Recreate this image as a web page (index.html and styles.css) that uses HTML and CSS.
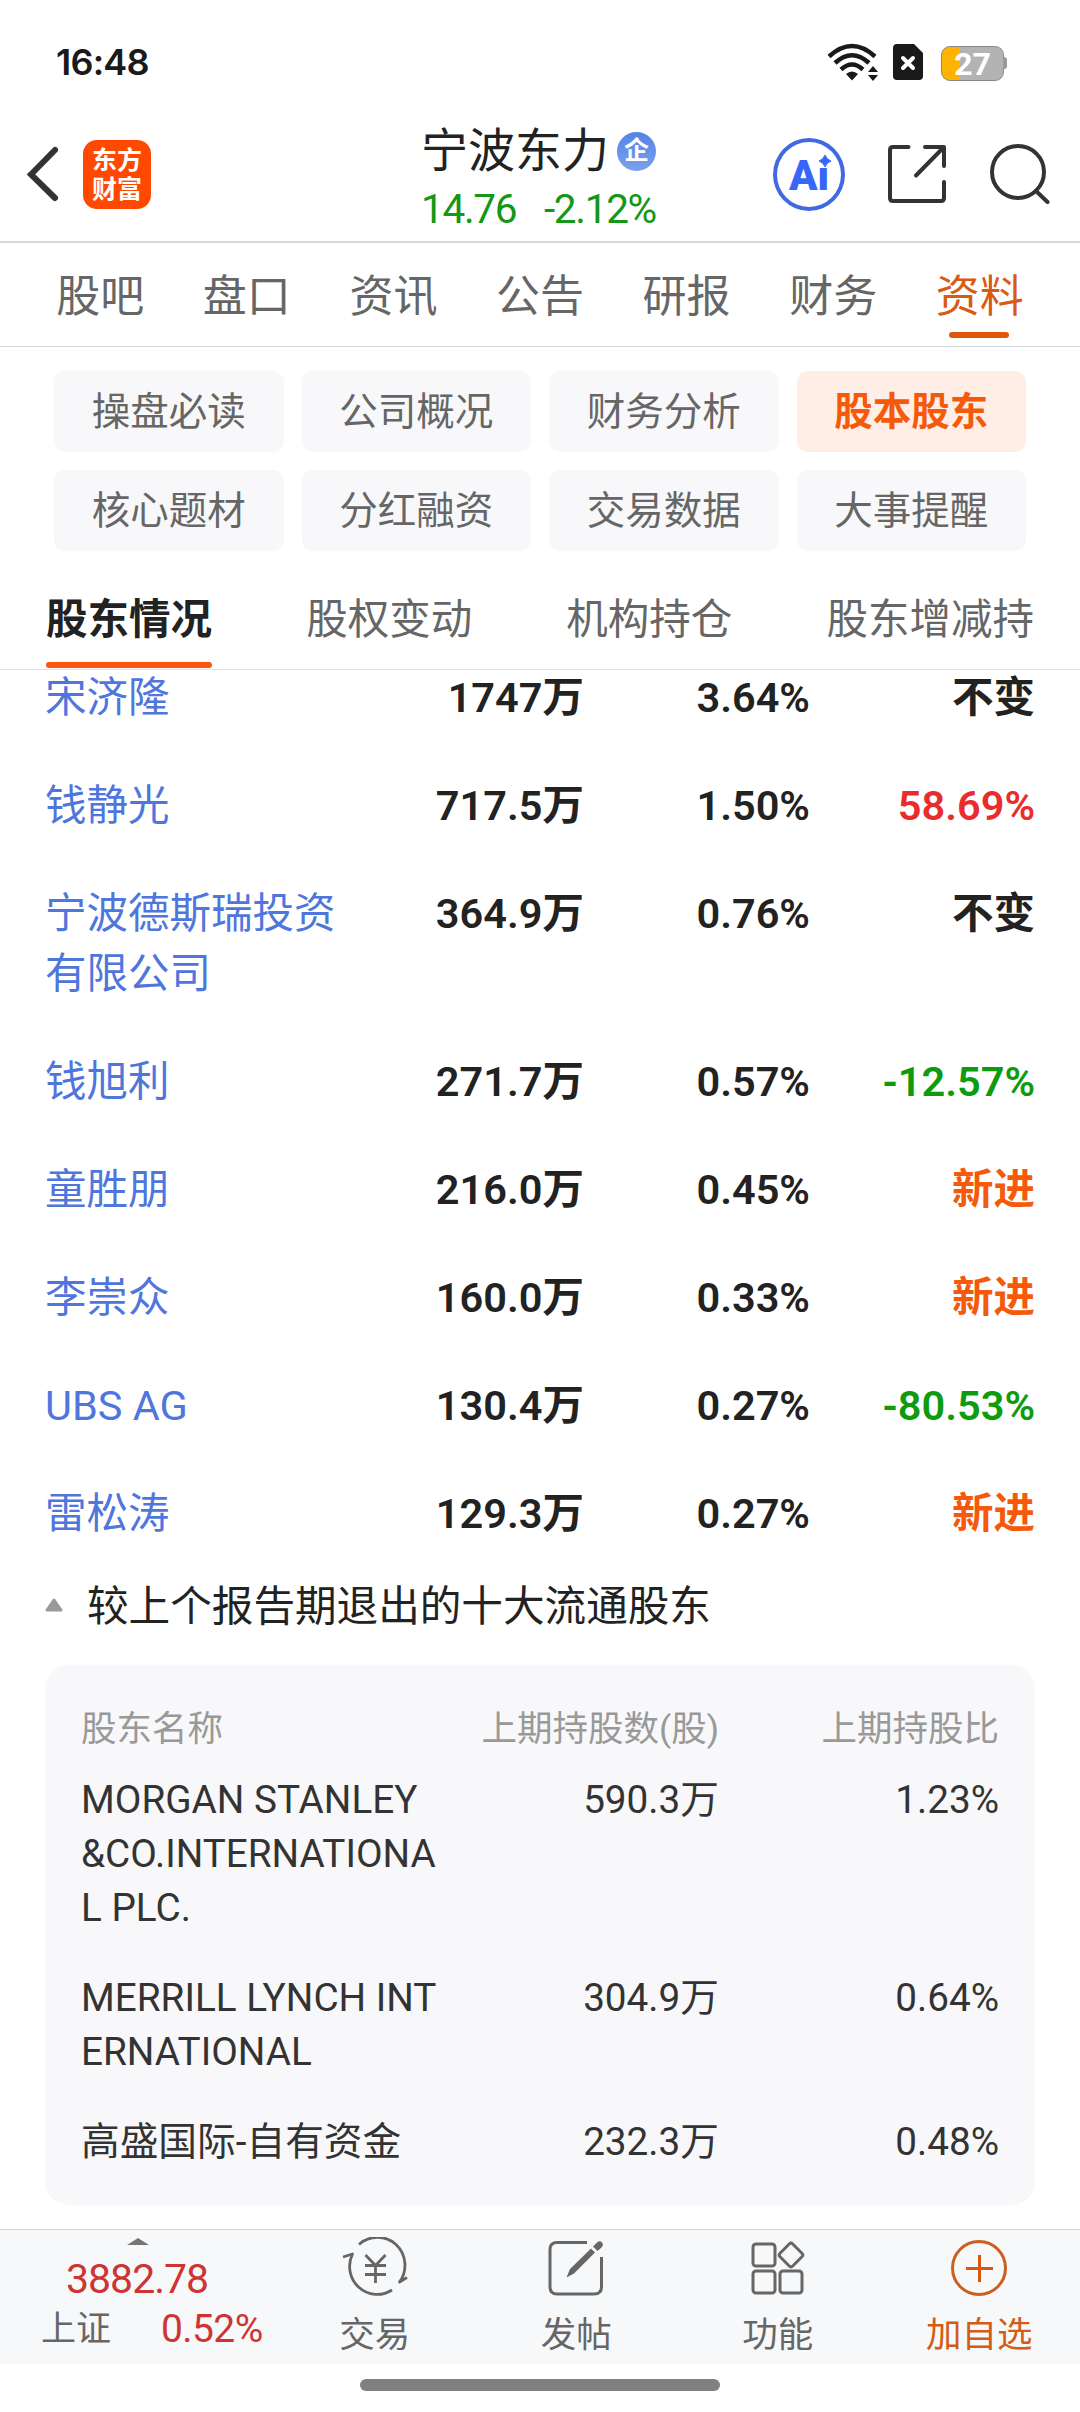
FILE: index.html
```html
<!DOCTYPE html>
<html lang="zh-CN">
<head>
    <meta charset="UTF-8">
    <meta name="viewport" content="width=device-width, initial-scale=1.0">
    <title>宁波东力 - 股本股东</title>
    <link rel="stylesheet" href="styles.css">
</head>
<body>

    <div class="status-bar">
        <span class="time">16:48</span>
        <div class="status-icons">
            <svg class="wifi" width="52" height="38" viewBox="0 0 52 38">
                <g fill="none" stroke="#1a1a1a" stroke-width="4.500">
                    <path d="M2 13.500 Q25 -7.500 48 13.500"/>
                    <path d="M8 20 Q25 4.500 42 20"/>
                    <path d="M14 26.500 Q25 16.500 36 26.500"/>
                </g>
                <path d="M19 31 Q25 26 31 31 L25 37.500 Z" fill="#1a1a1a"/>
                <path d="M41 29 L46 23 L51 29 Z M41 32 L51 32 L46 38 Z" fill="#1a1a1a"/>
            </svg>
            <svg class="sim" width="30" height="36" viewBox="0 0 30 36">
                <path d="M4 0 H21 L30 9 V32 Q30 36 26 36 H4 Q0 36 0 32 V4 Q0 0 4 0 Z" fill="#1a1a1a"/>
                <path d="M10 14 L20 24 M20 14 L10 24" stroke="#fff" stroke-width="4" stroke-linecap="round"/>
            </svg>
            <div class="battery"><span>27</span></div>
        </div>
    </div>

    <header class="header">
        <div class="header-left">
            <svg class="back" width="34" height="56" viewBox="0 0 34 56">
                <path d="M30 4 L6 28.500 L30 52" fill="none" stroke="#333" stroke-width="6" stroke-linecap="round"/>
            </svg>
            <div class="logo">东方<br>财富</div>
        </div>
        <div class="stock">
            <div class="stock-name">宁波东力<span class="badge">企</span></div>
            <div class="stock-price"><span>14.76</span><span>-2.12%</span></div>
        </div>
        <div class="header-right">
            <div class="ai">
                <span>Ai</span>
                <svg class="spark" width="14" height="14" viewBox="0 0 14 14">
                    <path d="M0 0 H14 V14 H0 Z" fill="#fff"/>
                    <path d="M7 1 Q8.500 5.500 13 7 Q8.500 8.500 7 13 Q5.500 8.500 1 7 Q5.500 5.500 7 1 Z" fill="#3866fa" stroke="#3866fa"/>
                </svg>
            </div>
            <svg class="share" width="58" height="60" viewBox="0 0 58 60">
                <g fill="none" stroke="#333" stroke-width="4" stroke-linecap="round" stroke-linejoin="round">
                    <path d="M20.500 3 H5 Q2 3 2 6 V54 Q2 57 5 57 H53 Q56 57 56 54 V38"/>
                    <path d="M37 3 H56 V22 M55 4 L28 31.500"/>
                </g>
            </svg>
            <svg class="search" width="60" height="62" viewBox="0 0 60 62">
                <circle cx="28" cy="29" r="26" fill="none" stroke="#333" stroke-width="4"/>
                <path d="M46 48 L57.500 59" stroke="#333" stroke-width="4" stroke-linecap="round"/>
            </svg>
        </div>
    </header>

    <nav class="tabs">
        <a>股吧</a>
        <a>盘口</a>
        <a>资讯</a>
        <a>公告</a>
        <a>研报</a>
        <a>财务</a>
        <a class="active">资料</a>
    </nav>

    <div class="chips">
        <a>操盘必读</a>
        <a>公司概况</a>
        <a>财务分析</a>
        <a class="active">股本股东</a>
        <a>核心题材</a>
        <a>分红融资</a>
        <a>交易数据</a>
        <a>大事提醒</a>
    </div>

    <nav class="subtabs">
        <a class="active">股东情况</a>
        <a>股权变动</a>
        <a>机构持仓</a>
        <a>股东增减持</a>
    </nav>

    <main class="content">
        <div class="holders">
            <div class="row"><a class="name">宋济隆</a><b>1747万</b><b>3.64%</b><b>不变</b></div>
            <div class="row"><a class="name">钱静光</a><b>717.5万</b><b>1.50%</b><b class="up">58.69%</b></div>
            <div class="row"><a class="name">宁波德斯瑞投资<br>有限公司</a><b>364.9万</b><b>0.76%</b><b>不变</b></div>
            <div class="row"><a class="name">钱旭利</a><b>271.7万</b><b>0.57%</b><b class="down">-12.57%</b></div>
            <div class="row"><a class="name">童胜朋</a><b>216.0万</b><b>0.45%</b><b class="new">新进</b></div>
            <div class="row"><a class="name">李崇众</a><b>160.0万</b><b>0.33%</b><b class="new">新进</b></div>
            <div class="row"><a class="name">UBS AG</a><b>130.4万</b><b>0.27%</b><b class="down">-80.53%</b></div>
            <div class="row"><a class="name">雷松涛</a><b>129.3万</b><b>0.27%</b><b class="new">新进</b></div>
        </div>

        <h3 class="exit-title">
            <svg width="18" height="14" viewBox="0 0 18 14"><path d="M9 2 L16 12 H2 Z" fill="#999" stroke="#999" stroke-width="3" stroke-linejoin="round"/></svg>
            <span>较上个报告期退出的十大流通股东</span>
        </h3>

        <div class="exit-card">
            <div class="exit-row head"><span>股东名称</span><span>上期持股数(股)</span><span>上期持股比</span></div>
            <div class="exit-row"><span>MORGAN STANLEY<br>&amp;CO.INTERNATIONA<br>L PLC.</span><span>590.3万</span><span>1.23%</span></div>
            <div class="exit-row"><span>MERRILL LYNCH INT<br>ERNATIONAL</span><span>304.9万</span><span>0.64%</span></div>
            <div class="exit-row"><span>高盛国际-自有资金</span><span>232.3万</span><span>0.48%</span></div>
        </div>
    </main>

    <footer class="bottom-bar">
        <div class="index">
            <svg width="22" height="7" viewBox="0 0 22 7"><path d="M11 0 L22 7 H0 Z" fill="#777"/></svg>
            <div class="index-value">3882.78</div>
            <div class="index-line"><span>上证</span><em>0.52%</em></div>
        </div>
        <a class="action">
            <svg width="66" height="60" viewBox="0 0 66 60">
                <g fill="none" stroke="#666" stroke-width="2.800" stroke-linejoin="round">
                    <path d="M17 7.500 A27.500 28 0 0 1 57.500 45 L65 40.500"/>
                    <path d="M50 53 A27.500 28 0 0 1 10.500 17 L1 20"/>
                    <path d="M23.500 18 L33.500 28.500 L43.500 18 M33.500 28 V46 M23 28.500 H44 M23 37.500 H44"/>
                </g>
            </svg>
            <span>交易</span>
        </a>
        <a class="action">
            <svg width="56" height="60" viewBox="0 0 56 60">
                <path d="M39 5.500 H9 Q2 5.500 2 12.500 V50 Q2 57 9 57 H46 Q53.500 57 53.500 50 V20" fill="none" stroke="#666" stroke-width="3"/>
                <path d="M18.500 40.500 L22 32 L43 11.500 L47 15.500 L26 36.500 Z M45 9.500 L49 5.500 Q52 3 54 5.500 Q56 8 53.500 10.500 L49.500 14 Z" fill="#666"/>
            </svg>
            <span>发帖</span>
        </a>
        <a class="action">
            <svg width="54" height="60" viewBox="0 0 54 60">
                <g fill="none" stroke="#666" stroke-width="3">
                    <rect x="2" y="7" width="22" height="22" rx="3"/>
                    <rect x="2" y="34" width="22" height="22" rx="3"/>
                    <rect x="29" y="34" width="22" height="22" rx="3"/>
                    <rect x="31" y="9" width="18" height="18" rx="2.500" transform="rotate(45 40 18)"/>
                </g>
            </svg>
            <span>功能</span>
        </a>
        <a class="action add">
            <svg width="58" height="60" viewBox="0 0 58 60">
                <circle cx="29" cy="31" r="26.500" fill="none" stroke="#ca5f20" stroke-width="3"/>
                <path d="M29.500 18 V45 M16 31.500 H43" stroke="#d8560f" stroke-width="3"/>
            </svg>
            <span>加自选</span>
        </a>
    </footer>
    <div class="home-indicator"></div>

</body>
</html>
```
FILE: styles.css
```css
* {
    box-sizing: border-box;
}
body {
    font-family: Roboto, 'Noto Sans CJK SC', sans-serif;
    margin: 0;
    width: 1080px;
    height: 2412px;
    display: flex;
    flex-direction: column;
    background: #fff;
    color: #222;
    overflow: hidden;
}
svg {
    display: block;
    flex: none;
}

/* status bar */
.status-bar {
    height: 100px;
    padding: 24px 76px 0 56px;
    display: flex;
    justify-content: space-between;
    align-items: center;
}
.time {
    font-family: Inter, Roboto, sans-serif;
    font-size: 36px;
    font-weight: 600;
    letter-spacing: -0.8px;
    color: #1a1a1a;
}
.status-icons {
    display: flex;
    align-items: center;
}
.sim {
    margin: 0 18px 0 14px;
}
.battery {
    position: relative;
    width: 63px;
    height: 35px;
    margin-top: 2px;
    border: 1px solid #888;
    border-radius: 9px;
    background: linear-gradient(90deg, #ffb300 18px, #b3b3b3 18px);
    color: #fff;
    font-size: 32px;
    font-weight: 700;
    line-height: 35px;
    text-align: center;
}
.battery::after {
    content: '';
    position: absolute;
    right: -4px;
    top: 10px;
    width: 4px;
    height: 12px;
    border-radius: 0 3px 3px 0;
    background: #999;
}

/* header */
.header {
    height: 143px;
    padding: 0 30px 0 25px;
    display: flex;
    justify-content: space-between;
    border-bottom: 2px solid #d5d8d9;
}
.header-left, .header-right {
    display: flex;
    align-items: center;
    width: 360px;
    height: 148px;
}
.logo {
    width: 68px;
    height: 69px;
    margin-left: 24px;
    padding-top: 6px;
    border-radius: 14px;
    background: #ff4800;
    color: #fff;
    font-size: 25px;
    font-weight: 700;
    line-height: 29px;
    text-align: center;
}
.stock {
    padding: 22px 0 0 2px;
    white-space: nowrap;
}
.stock-name {
    display: flex;
    align-items: center;
    font-size: 47px;
    line-height: 58px;
}
.badge {
    width: 39px;
    height: 39px;
    margin-left: 8px;
    border-radius: 50%;
    background: linear-gradient(#5583e6, #7ba0ec);
    color: #fff;
    font-size: 25px;
    font-weight: 700;
    line-height: 37px;
    text-align: center;
}
.stock-price {
    display: flex;
    justify-content: space-between;
    font-size: 40.5px;
    line-height: 58px;
    letter-spacing: -1.3px;
    color: #149714;
}
.header-right {
    justify-content: flex-end;
}
.ai {
    position: relative;
    width: 72px;
    height: 73px;
    border: 4px solid #4169e1;
    border-radius: 50%;
    color: #3866fa;
    font-size: 42px;
    font-weight: 900;
    line-height: 67px;
    text-align: center;
}
.spark {
    position: absolute;
    left: 41px;
    top: 12px;
}
.share {
    margin: 0 44px 0 43px;
}

/* tabs */
.tabs {
    height: 104px;
    padding: 0 27px;
    display: flex;
    border-bottom: 1px solid #d5d8d9;
}
.tabs a {
    position: relative;
    flex: 1;
    font-size: 44px;
    line-height: 108px;
    text-align: center;
    color: #666;
}
.tabs .active {
    color: #d85a14;
}
.tabs .active::after {
    content: '';
    position: absolute;
    left: 50%;
    bottom: 8px;
    width: 60px;
    height: 6px;
    margin-left: -31px;
    border-radius: 3px;
    background: #e0560c;
}
.chips {
    padding: 24px 54px 0;
    display: grid;
    grid-template-columns: repeat(4, 1fr);
    gap: 18px;
}
.chips a {
    height: 81px;
    border-radius: 11px;
    background: #f8f8fa;
    color: #666;
    font-size: 38.5px;
    line-height: 81px;
    text-align: center;
}
.chips .active {
    background: #feeee6;
    color: #f55a0c;
    font-weight: 700;
}
.subtabs {
    height: 119px;
    padding: 0 46px;
    display: flex;
    justify-content: space-between;
    border-bottom: 1px solid #e3e3e3;
}
.subtabs a {
    position: relative;
    font-size: 41.5px;
    line-height: 137px;
    color: #666;
}
.subtabs .active {
    color: #222;
    font-weight: 700;
}
.subtabs .active::after {
    content: '';
    position: absolute;
    left: 0;
    bottom: 1px;
    width: 100%;
    height: 6px;
    border-radius: 3px;
    background: #fc560a;
}

/* shareholder list */
.content {
    height: 1559px;
    padding: 0 45px;
    overflow: hidden;
}
.holders {
    margin-top: -26px;
}
.row {
    padding: 24px 0;
    display: grid;
    grid-template-columns: 311px 228px 226px 225px;
    font-size: 41.5px;
    line-height: 60px;
}
.row b {
    font-weight: 600;
    text-align: right;
}
.name {
    color: #4f76dc;
}
.row .up {
    color: #e92d2d;
}
.row .down {
    color: #0e9c0e;
}
.row .new {
    color: #f55a0c;
}
.exit-title {
    height: 97px;
    margin: 0;
    display: flex;
    align-items: center;
    gap: 24px;
    font-size: 41.6px;
    font-weight: 400;
    padding-bottom: 27px;
}
.exit-title svg {
    margin-top: 3px;
}
.exit-card {
    height: 540px;
    border-radius: 24px;
    background: #f8f8fa;
    padding: 37px 36px;
}
.exit-row {
    display: grid;
    grid-template-columns: 380px 258px 280px;
    margin-bottom: 36px;
    font-size: 38.7px;
    line-height: 54px;
    color: #333;
    white-space: nowrap;
}
.exit-row span + span {
    text-align: right;
}
.exit-row.head {
    margin-bottom: 17px;
    font-size: 35.5px;
    color: #999;
}

/* bottom bar */
.bottom-bar {
    height: 135px;
    display: flex;
    border-top: 1px solid #d0d3d6;
    background: #f7f8fa;
}
.index {
    width: 274px;
    padding: 8px 0 0 41px;
}
.index svg {
    margin-left: 86px;
}
.index-value {
    padding-left: 25px;
    margin-top: 9px;
    font-size: 41px;
    line-height: 50px;
    letter-spacing: -1px;
    color: #cf3434;
}
.index-line {
    display: flex;
    gap: 50px;
    font-size: 35px;
    line-height: 51px;
    color: #666;
}
.index-line em {
    font-size: 39px;
    font-style: normal;
    letter-spacing: -0.6px;
    color: #cf3434;
}
.action {
    flex: 1;
    padding-top: 7px;
    display: flex;
    flex-direction: column;
    align-items: center;
    font-size: 35.5px;
    line-height: 77px;
    color: #666;
}
.action.add {
    color: #d25c18;
}
.home-indicator {
    width: 360px;
    height: 12px;
    margin: 15px auto 0;
    border-radius: 6px;
    background: #808080;
}
```
